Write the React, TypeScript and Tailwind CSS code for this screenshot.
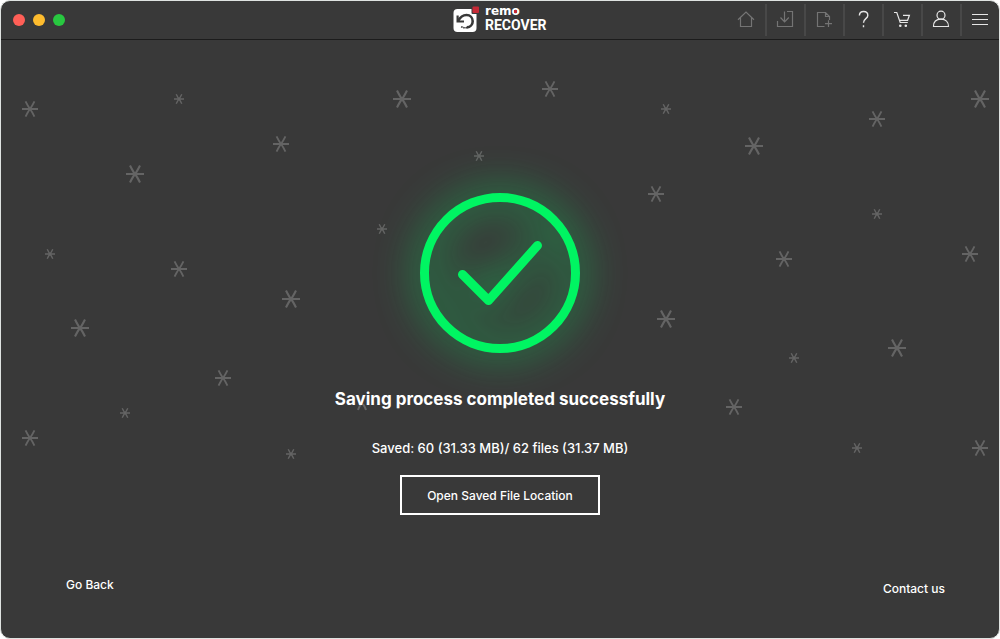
import type { ReactNode } from "react";

const STARS: [x: number, y: number, size: number][] = [
  [30, 109, 16],
  [179, 99, 10],
  [281, 144, 16],
  [135, 174, 18],
  [50, 254, 10],
  [179, 269, 16],
  [402, 99, 18],
  [550, 89, 16],
  [479, 156, 10],
  [382, 229, 10],
  [291, 299, 18],
  [80, 328, 18],
  [223, 378, 16],
  [125, 413, 10],
  [30, 438, 16],
  [291, 454, 10],
  [666, 109, 10],
  [754, 146, 18],
  [877, 119, 16],
  [980, 99, 18],
  [656, 194, 16],
  [877, 214, 10],
  [784, 259, 16],
  [970, 254, 16],
  [666, 319, 18],
  [897, 348, 18],
  [794, 358, 10],
  [734, 407, 16],
  [857, 448, 10],
  [980, 448, 16],
];

type ToolItem = {
  label: string;
  disabled?: boolean;
  icon: ReactNode;
};

const TOOLS: ToolItem[] = [
  {
    label: "Home",
    disabled: true,
    icon: <path d="M12 18.7 20 11l8 7.7M14.5 16.8v8.7h11v-8.7" />,
  },
  {
    label: "Save session",
    disabled: true,
    icon: (
      <path d="M22 10.5h5.5v15h-15v-5.5M19.5 10.5v10.3M15.5 16.5l4.1 4.3 4.2-4.3" />
    ),
  },
  {
    label: "New file",
    disabled: true,
    icon: (
      <path d="M20.5 25.5h-7v-14h8l4 4v3.5M21.5 11.5v4h4M24.5 19.3v6.8M21 22.6h7" />
    ),
  },
  {
    label: "Help",
    icon: (
      <path
        strokeWidth="1.4"
        d="M16.4 14.6c0-2.6 1.8-4.1 4.2-4.1s4.2 1.6 4.2 3.9c0 3.4-4.3 3.2-4.3 7.4M20.5 24.2v2"
      />
    ),
  },
  {
    label: "Buy",
    icon: (
      <>
        <path d="M12 11.5h2.8l3.4 10h7.6M21 14.3h6.4l-1.8 5h-8" />
        <circle cx="18.3" cy="24.7" r="0.7" />
        <circle cx="23.8" cy="24.7" r="0.7" />
      </>
    ),
  },
  {
    label: "Account",
    icon: (
      <>
        <circle cx="20" cy="14.2" r="4" />
        <path d="M12.5 25.5c0-4.6 2.8-7.3 7.5-7.3s7.5 2.7 7.5 7.3z" />
      </>
    ),
  },
  {
    label: "Menu",
    icon: <path d="M12 13.5h16M12 18.5h16M12 23.5h16" />,
  },
];

function TrafficLights() {
  return (
    <div className="flex gap-2 pl-3">
      <button type="button" aria-label="Close" className="size-3 rounded-full bg-[#ff5f57]" />
      <button type="button" aria-label="Minimize" className="size-3 rounded-full bg-[#febc2e]" />
      <button type="button" aria-label="Zoom" className="size-3 rounded-full bg-[#28c840]" />
    </div>
  );
}

function Logo() {
  return (
    <svg
      width="94"
      height="30"
      viewBox="0 0 94 30"
      className="overflow-visible"
      role="img"
      aria-label="remo RECOVER"
    >
      <rect x="0.5" y="4" width="23" height="23" rx="4" fill="#fff" />
      <g fill="none" stroke="#393939">
        <path d="M4.6 10.5v6h6.4" strokeWidth="2.2" />
        <path
          d="M5.2 16c2-4 4.9-6 8.3-6 3.7 0 6.2 2.8 6.2 6.2 0 3.2-2.4 6-5.8 6.2"
          strokeWidth="2.6"
        />
        <path d="M14 22.6c-2.2.4-4.4 0-6-1.2" strokeWidth="1.6" strokeDasharray="1.6 0.6" />
      </g>
      <rect x="18.5" y="0.5" width="8" height="8.5" rx="1" fill="#393939" />
      <rect x="19.5" y="1.5" width="6.5" height="6.5" rx="1" fill="#c62a36" />
      <text
        x="32"
        y="10"
        fill="#fff"
        className="font-['DejaVu_Sans',sans-serif] text-[12px] font-bold"
      >
        remo
      </text>
      <rect x="61" y="5" width="3" height="3" fill="#c62a36" />
      <text
        x="32"
        y="25"
        fill="#fff"
        className="font-[Roboto,sans-serif] text-[14px] font-bold"
      >
        RECOVER
      </text>
    </svg>
  );
}

function Toolbar() {
  return (
    <nav aria-label="Tools" className="flex justify-end">
      {TOOLS.map((tool) => (
        <div key={tool.label} className="group flex items-center">
          <button
            type="button"
            aria-label={tool.label}
            disabled={tool.disabled}
            className="text-[#e6e6e6] disabled:text-[#747474]"
          >
            <svg
              width="37"
              height="38"
              viewBox="2 0 37 38"
              fill="none"
              stroke="currentColor"
              strokeWidth="1.2"
            >
              {tool.icon}
            </svg>
          </button>
          <span className="h-8 w-0.5 bg-[#484848] group-last:hidden" />
        </div>
      ))}
    </nav>
  );
}

function Stars() {
  return (
    <svg
      aria-hidden="true"
      viewBox="1 40 998 598"
      preserveAspectRatio="xMidYMin slice"
      className="absolute inset-0 size-full"
      fill="none"
      stroke="#646464"
    >
      {STARS.map(([x, y, size]) => (
        <path
          key={`${x}-${y}`}
          transform={`translate(${x} ${y}) scale(${size / 18})`}
          strokeWidth={size === 10 ? 2.6 : 2.1}
          d="M-9 0H9M-5-8.5Q-2-2.5 0 0T5 8.5M5-8.5Q2-2.5 0 0T-5 8.5"
        />
      ))}
      {/* mostly hidden behind the heading */}
      <path d="M361 404Q359 407 358 410M363 404Q365 407 366 410" strokeWidth="2" />
    </svg>
  );
}

function SuccessMark() {
  return (
    <svg
      width="160"
      height="160"
      viewBox="0 0 160 160"
      fill="none"
      stroke="#00f562"
      strokeWidth="9"
      strokeLinecap="round"
      strokeLinejoin="round"
      className="overflow-visible drop-shadow-[0_0_20px_#00f562e0]"
      role="img"
      aria-label="Success"
    >
      <circle cx="80" cy="80" r="75.5" />
      <path d="m42.5 81.5 26 26 49-55" />
    </svg>
  );
}

export default function App() {
  return (
    <div className="flex min-h-screen bg-white font-[Inter,sans-serif] text-white">
      <div className="flex flex-1 flex-col overflow-hidden rounded-[10px] border border-[#dfe3e1] bg-[#393939]">
        <header className="grid grid-cols-[1fr_auto_1fr] items-center border-b border-[#1c1c1c]">
          <TrafficLights />
          <Logo />
          <Toolbar />
        </header>

        <main className="relative flex flex-1 flex-col">
          <Stars />
          <section className="relative flex flex-col items-center pt-[153px]">
            <SuccessMark />
            <h1 className="mt-[34px] text-[17px]/6 font-bold">
              Saving process completed successfully
            </h1>
            <p className="mt-[27px] text-[13px]/5 font-medium">
              Saved: 60 (31.33 MB)/ 62 files (31.37 MB)
            </p>
            <button
              type="button"
              className="mt-[17px] h-10 w-[200px] border-2 border-white pt-0.5 text-xs font-medium"
            >
              Open Saved File Location
            </button>
          </section>

          <footer className="relative mt-auto flex items-start justify-between pr-[54px] pb-[39px] pl-[65px] text-xs/5 font-medium">
            <a href="#back">Go Back</a>
            <a href="#contact" className="pt-1">
              Contact us
            </a>
          </footer>
        </main>
      </div>
    </div>
  );
}
